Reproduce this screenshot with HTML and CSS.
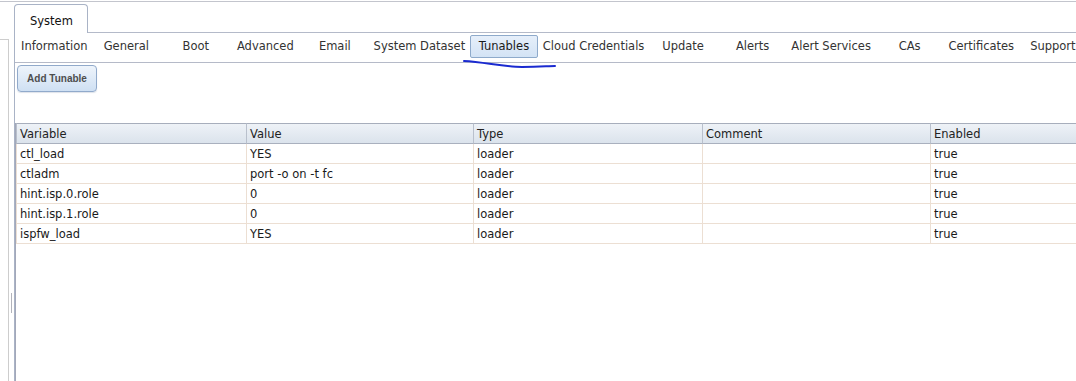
FILE: index.html
```html
<!DOCTYPE html>
<html lang="en">
<head>
<meta charset="utf-8">
<title>System - Tunables</title>
<link rel="stylesheet" href="styles.css">
</head>
<body>
<div class="topline"></div>
<div class="frame">
  <aside class="tree"></aside>
  <div class="splitter"><span class="grip"></span></div>
  <main class="main">
    <div class="tabbar">
      <div class="tab">System</div>
      <div class="tabfill"></div>
    </div>
    <section class="panel">
      <nav class="subtabs">
        <span class="st">Information</span>
        <span class="st">General</span>
        <span class="st">Boot</span>
        <span class="st">Advanced</span>
        <span class="st">Email</span>
        <span class="st">System Dataset</span>
        <span class="st sel">Tunables</span>
        <span class="st">Cloud Credentials</span>
        <span class="st">Update</span>
        <span class="st">Alerts</span>
        <span class="st">Alert Services</span>
        <span class="st">CAs</span>
        <span class="st">Certificates</span>
        <span class="st">Support</span>
      </nav>
      <div class="toolbar"><button class="btn">Add Tunable</button></div>
      <div class="grid">
        <table class="tbl">
          <thead>
            <tr>
              <th class="c1">Variable</th>
              <th class="c2">Value</th>
              <th class="c3">Type</th>
              <th class="c4">Comment</th>
              <th class="c5">Enabled</th>
            </tr>
          </thead>
          <tbody>
            <tr><td>ctl_load</td><td>YES</td><td>loader</td><td></td><td>true</td></tr>
            <tr><td>ctladm</td><td>port -o on -t fc</td><td>loader</td><td></td><td>true</td></tr>
            <tr><td>hint.isp.0.role</td><td>0</td><td>loader</td><td></td><td>true</td></tr>
            <tr><td>hint.isp.1.role</td><td>0</td><td>loader</td><td></td><td>true</td></tr>
            <tr><td>ispfw_load</td><td>YES</td><td>loader</td><td></td><td>true</td></tr>
          </tbody>
        </table>
      </div>
    </section>
  </main>
</div>
<svg class="annot" width="1076" height="381" viewBox="0 0 1076 381">
  <path d="M464 61 C 484 62, 504 67, 522 67 S 548 66, 555 66" fill="none" stroke="#1a2ad0" stroke-width="2" stroke-linecap="round"/>
</svg>
</body>
</html>
```
FILE: styles.css
```css
html, body {
  margin: 0;
  height: 100%;
  background: #fff;
  overflow: hidden;
}
body {
  font-family: "DejaVu Sans", Verdana, sans-serif;
  font-size: 11.5px;
  color: #222;
  position: relative;
}
.topline {
  height: 1px;
  margin-top: 1px;
  background: #c3c5cd;
}
.frame {
  display: flex;
  height: 379px;
}
.tree {
  width: 9px;
  box-sizing: border-box;
  margin-top: 37px;
  border-top: 1px solid #cdcdcd;
  border-right: 1px solid #cdcdcd;
}
.splitter {
  width: 5px;
  display: flex;
  flex-direction: column;
}
.grip {
  display: block;
  width: 1px;
  height: 20px;
  margin: 291px 0 0 2px;
  background: #b2b3bb;
}
.main {
  flex: 1;
  min-width: 0;
  margin-top: 2px;
  display: flex;
  flex-direction: column;
}
.tabbar {
  display: flex;
  height: 29px;
}
.tab {
  width: 74px;
  box-sizing: border-box;
  border: 1px solid #a9b3c6;
  border-bottom: none;
  border-radius: 4px 4px 0 0;
  padding: 9px 0 0 15px;
  line-height: 14px;
  color: #111;
  background: #fff;
}
.tabfill {
  flex: 1;
  border-bottom: 1px solid #b4bac9;
}
.panel {
  flex: 1;
  display: flex;
  flex-direction: column;
  border-left: 1px solid #a9b3c6;
}
.subtabs {
  display: flex;
  height: 30px;
  box-sizing: border-box;
  padding: 2px 0 0 2px;
  border-bottom: 1px solid #b5bac8;
  white-space: nowrap;
  overflow: hidden;
}
.st {
  flex-shrink: 0;
  height: 23px;
  box-sizing: border-box;
  min-width: 67.5px;
  margin: 0 1px;
  padding: 0 2px;
  border: 1px solid transparent;
  border-radius: 2px;
  text-align: center;
  line-height: 20px;
  color: #333;
}
.st.sel {
  color: #1a1a1a;
  background: linear-gradient(#e6effa, #d3e3f5);
  border-color: #8eaacb;
}
.toolbar {
  height: 60px;
  box-sizing: border-box;
  padding: 2px 0 0 2px;
}
.btn {
  display: block;
  width: 80px;
  height: 27px;
  box-sizing: border-box;
  padding: 0;
  border: 1px solid #91aacb;
  border-radius: 4px;
  background: linear-gradient(#eef4fb, #cfe0f3);
  font-family: "Liberation Sans", Arial, sans-serif;
  font-weight: bold;
  font-size: 10px;
  color: #4e4e4e;
  box-shadow: 0 1px 1px rgba(120, 140, 170, 0.25);
}
.grid {
  flex: 1;
  border-left: 1px solid #a3a8b9;
}
.tbl {
  width: 100%;
  table-layout: fixed;
  border-collapse: separate;
  border-spacing: 0;
}
.tbl th, .tbl td {
  box-sizing: border-box;
  padding: 0 3px;
  text-align: left;
  font-weight: normal;
  white-space: nowrap;
  overflow: hidden;
}
.tbl th {
  height: 21px;
  border-top: 1px solid #a7aebc;
  border-bottom: 1px solid #a9b0be;
  border-left: 1px solid #b9c0cc;
  background: linear-gradient(#eef2f7, #dbe3ec);
  color: #222;
}
.tbl td {
  height: 20px;
  border-left: 1px solid #ecdfd3;
  border-bottom: 1px solid #ecdfd3;
  color: #1a1a1a;
}
.c1 { width: 230px; }
.c2 { width: 227px; }
.c3 { width: 229px; }
.c4 { width: 228px; }
.annot {
  position: absolute;
  left: 0;
  top: 0;
  pointer-events: none;
}
```
